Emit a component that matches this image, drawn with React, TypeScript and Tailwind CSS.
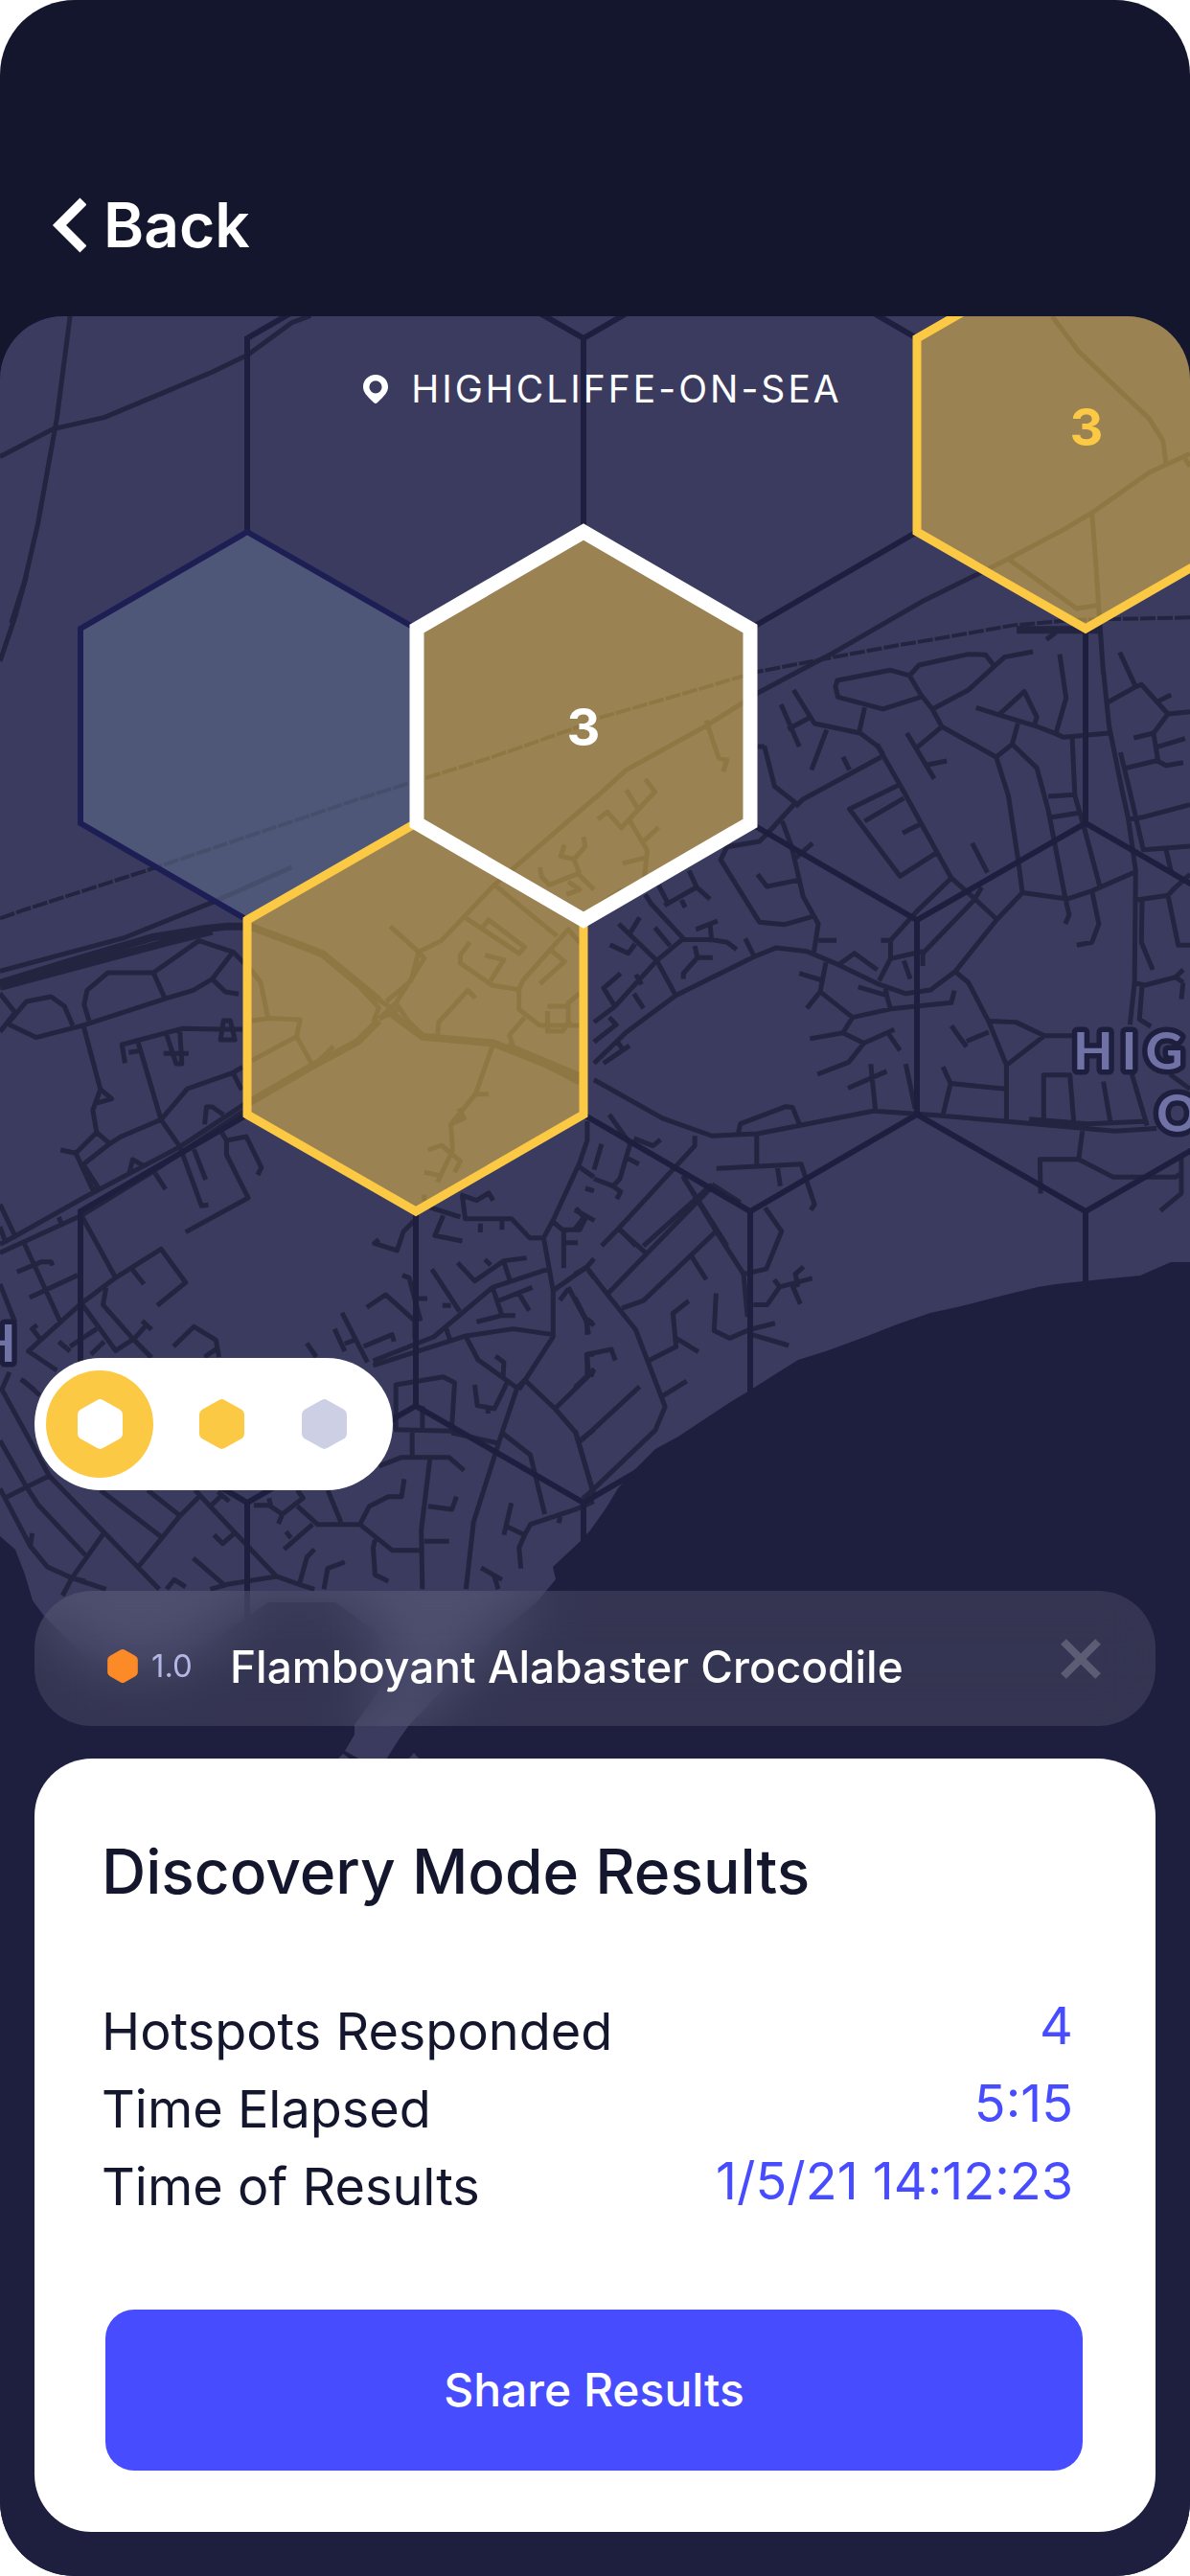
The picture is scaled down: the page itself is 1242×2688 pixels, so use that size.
import React, { useState } from "react";

type Tile = { transform: string; roads: string; thick?: string; rail?: string };

const LAND =
  "M0 330H1242V1317H1222L1190 1331L1149 1335L1102 1340L1083 1343L1042 1353L999 1364L971 1370L936 1382L903 1395L862 1410L833 1419L809 1434L784 1450L764 1462L735 1481L708 1499L684 1512L661 1535L645 1553L633 1573L616 1597L606 1608L577 1635L580 1648L560 1672L520 1705L470 1755L427 1800L415 1817L403 1836H376L360 1827L370 1810V1800L405 1750L395 1705L350 1672L280 1672L240 1700L180 1740L100 1740L45 1685L34 1670L26 1643L16 1617L0 1603Z";

const TILES: Tile[] = [
  {
    transform: "translate(0 150) scale(.3954 .3333)",
    roads:
      "M185 540L150 860L100 1190L65 1370L30 1500M0 980L140 893L275 857L420 785L560 715L655 660L770 560L820 538",
  },
  {
    transform: "translate(620 300) scale(.3967 .3333)",
    roads:
      "M1205 90L1275 200L1380 320L1460 410L1497 480L1505 555M1568 520L1460 580L1310 705L1240 755L1090 850L860 985L620 1150L430 1270M1555 535L1568 560M1310 705L1320 860L1330 1040L1340 1210M1090 850L1270 1005L1325 995M1190 1102L1215 1080M1155 1140L1080 1157L985 1260L890 1320L860 1275L830 1215L780 1198L640 1230L635 1250L642 1282L760 1320L865 1280M830 1215L855 1182L985 1148L1030 1150L1053 1185M890 1320L915 1375L1058 1470L1100 1430L1115 1365M915 1375L850 1440M823 1395L895 1538M875 1495L928 1482M1005 1315L1065 1338L1160 1372L1215 1397L1235 1408L1355 1395M1065 1338L1132 1265L1165 1345L1158 1372M1225 1148L1242 1285L1215 1397M525 1260L580 1365L700 1395L745 1435L760 1460M492 1305L540 1437M510 1383L570 1345M612 1385L572 1510M712 1315L697 1395M430 1437H448M1383 1142L1425 1250L1350 1300M1425 1250L1440 1243L1510 1335L1568 1328M1485 1295L1518 1275M1510 1335L1472 1395L1420 1410M1472 1395L1478 1440L1555 1412M1478 1440L1485 1490",
    thick: "M1112 1072H1335",
    rail: "M1568 1033L1370 1038L1270 1040L1100 1058L940 1092L800 1120L640 1155L430 1203L240 1270L0 1352",
  },
  {
    transform: "translate(0 600) scale(.3954 .3333)",
    roads:
      "M70 0L40 130L0 270M0 1240L330 1135L560 1025L770 915M0 1310L40 1370L0 1430M20 1405L70 1335L135 1320L170 1350L192 1410M20 1405L95 1448L220 1410L440 1325L510 1300L560 1265L615 1180L525 1145L405 1245L435 1325M405 1245H285L230 1300L222 1345L235 1395M560 1265L595 1305L630 1312M615 1180L665 1240L688 1275L708 1390M665 1395L708 1388L792 1392L783 1445M985 1400L1000 1355L950 1290L850 1190M1000 1390L1045 1365L1000 1330M1045 1340L1000 1390M1030 1100L1105 1180L1120 1200L1045 1340L1080 1400L1120 1445M1105 1180L1085 1270L1020 1335M1105 1180L1165 1145L1225 1070L1305 970L1568 700M1305 970L1470 1130M1225 1070L1370 1185L1385 1165L1290 1080L1272 1105M1240 1150L1215 1190V1215L1300 1285L1370 1298M1280 1190L1330 1205L1295 1270M1370 1298L1380 1270L1500 1110L1530 1150M1370 1298V1360L1425 1410H1530M1425 1280L1490 1210L1455 1175M1530 1310L1500 1340V1410M1445 1350H1500M1385 1385L1345 1440L1355 1480M1155 1440L1158 1400L1235 1300L1255 1325M1425 915L1430 945L1450 970L1525 935L1568 985M1540 820L1545 850L1515 890L1480 880L1490 845M1515 890L1530 935M1495 1000L1530 985L1500 960",
    thick:
      "M0 1278L200 1205L400 1135L540 1108L600 1100H660L850 1185L1000 1330M0 1290L440 1150L560 1115",
    rail: "M0 1075L60 1050L400 920L700 800L950 700L1300 570L1540 470L1568 458",
  },
  {
    transform: "translate(620 700) scale(.3967 .3827)",
    roads:
      "M1340 0L1355 150L1390 330L1405 400L1415 470L1425 545L1422 850L1410 965M1385 222L1410 330L1445 488L1568 478M1400 265L1480 245L1505 258L1550 250M1405 405L1440 400L1568 365M1258 180L1265 340L1290 430L1330 585M1195 342L1265 338M1200 400L1272 388M1100 200L1165 265L1195 380L1240 620L1250 665L1240 690M1058 235L1090 340L1115 510L1127 605L1245 622L1310 600L1420 550M1127 605L1060 678L950 820L885 870L820 880L750 855L640 800L560 765L480 755L420 780L215 885L85 985L0 1070M1310 600L1328 690L1310 740L1270 748M1425 625L1510 612L1530 590L1568 555M1505 488L1520 555M1510 612L1537 748H1568M1442 625L1440 740L1470 815M1425 852L1450 857L1530 835L1550 850M1530 835L1550 815M1550 850L1545 895M1442 857L1435 950L1465 970M448 205L475 315L530 360L455 445L435 465L350 480L333 515L435 685L500 692L575 670M755 235L550 350L530 370M655 235L672 270M745 200L760 230L810 320L860 415L940 565L1000 620L1060 678M800 312L672 377L805 560L900 497M815 347L712 410M812 442L858 418M940 565L850 655L780 735V785L750 845M495 410L520 480L540 570L550 615L590 690L578 770M430 555L455 588L540 570M575 470L525 515M590 735H638M995 470L1035 550M1020 590L1000 625L865 770V805M755 735H780M780 785L865 765M815 790L832 840M645 800L685 770L745 815M610 795L595 875L680 945L780 922L940 905L948 872M540 825L595 842M595 875L560 920M695 862L770 885L780 922M765 855L770 885M568 1003L655 987L710 1015L790 978M655 987L680 945M710 1015L670 1067L588 1100M775 990L805 1035M728 1072L740 1195M668 1138L770 1092M820 1072L845 1195M950 820L985 850L1040 960L1085 1075V1225M1040 955L1110 958L1185 995H1262M1185 995L1088 1073M940 968L980 1025M980 1010L1038 985M918 1080L938 1125L918 1210M938 1125L1083 1140M1183 1220V1102H1252L1262 1228M1340 1120L1358 1228M1415 1100L1455 1240M1145 1222L1300 1235L1455 1228M0 1115L180 1220L310 1268L430 1262L540 1240L735 1200L900 1212L1080 1228L1370 1255L1480 1248M380 1258L385 1235L505 1188L522 1190L542 1240M428 1262V1345M322 1357L545 1345L580 1455L570 1470M482 1350L490 1405M1285 1255L1275 1332L1365 1380H1530L1545 1370M1275 1332H1173L1175 1425M1545 1320V1425L1490 1472M1515 1100L1568 1140M135 610L150 635L235 730L165 790L55 915L0 958M170 585L195 635M185 640L270 590L250 545M270 590L305 622M230 625L240 645M235 733H310L350 740L375 760M268 705L325 682M305 690L310 740M265 750L272 782L235 825V840M272 782H312M65 690L165 790L215 885M120 672L95 715M42 747L90 770L108 745M160 700L200 750M398 730L422 780M110 828L125 855M70 825L25 865L55 915M105 880L130 920M0 1012L58 965L40 945M25 1070L93 1022M60 1010L75 1030M0 350L85 270L295 150L430 62M295 135L328 238L350 243L340 275M10 405L35 385L72 428L160 330L135 295M85 325L115 375M95 410L140 490L130 590L70 600L10 640M130 465L170 427M75 525L135 510M40 1210L95 1290L68 1385L50 1405L0 1385M105 1275L155 1295L175 1278M90 1330L118 1345M20 1290L0 1360M50 1405L70 1420L60 1440M265 1268V1295L65 1520L20 1568M235 1380L350 1568M65 1520L110 1568M310 1400L130 1568M310 1400L385 1450",
  },
  {
    transform: "translate(0 1050) scale(.3954 .3333)",
    roads:
      "M220 60L265 260L245 325L255 395L200 460L245 575L258 565L220 495L290 430L255 395M160 450L200 460M265 260L295 290L250 305M330 178L322 120L480 70L580 72H640M340 145L365 140M365 115L425 355M440 90L465 180H480L475 80M432 148H498M582 105L590 45H608L620 105ZM425 355L495 258L615 208L640 190M615 208L638 262M425 355L320 408L290 430M425 355L475 440L532 625L550 622M340 530L350 480L380 500M540 370L545 315H560L590 340M660 295L475 440L220 600L40 720L0 745M660 315L400 520L215 655L0 772M405 515L437 573M512 448L543 543M585 395L598 420L650 408L690 505L680 528M598 420V465L655 600L490 707M0 620L40 720M0 690L15 740M155 660L165 690M65 745L160 990M45 832L110 800L135 800L138 812M78 912L205 842M215 655L305 850L425 760L490 865L415 937M350 825L380 870M305 850L215 930L75 1080L150 1140M280 880L272 935L350 1040L400 1100M215 930L305 1078L355 1040L385 1000M375 985L400 1012M255 1010L185 1065M155 1050L185 1080M105 1040L85 1010L98 998M240 1090L275 1050M0 870L40 990M458 1065L512 1003L570 1045L578 1098M540 1098L575 1070M55 1168L90 1200M810 1055L835 1098M665 170L783 95L825 185M880 125L830 185M1340 120L1530 215M1300 125L1255 275L1190 370L1195 450L1155 550M1255 275H1290M1190 370L1225 350L1210 320M1130 450L1165 435L1215 485L1200 520M1120 520L1160 530M1120 590V610M1445 15V78H1485L1505 45M1095 670L1065 705L1048 765L988 742L1000 730M1135 630L1215 660M1170 655L1148 718L1220 735M1220 590L1228 665H1350L1398 725H1435L1460 670L1530 490L1550 420V360M1215 590L1258 608L1290 585L1302 608M1268 680V708M1325 670V700M1435 725L1460 890V1035L1370 1200M1450 822L1300 880L1145 1035L985 1110M1460 1028L1355 1010L1230 1032L985 1125M1300 880L1325 968L1258 988M1325 968H1360M1310 925L1405 880M1370 900L1397 953M1208 803L1253 860L1330 797L1390 788M1330 800L1345 855M1280 793L1295 810M1140 823L1213 955M1168 937H1190M1178 1010L1188 1045M1062 842L1080 850L1110 985M1095 1040V985L1018 903L968 943M1105 915H1128M903 960L970 1115M883 1010L910 1080M910 1057L935 1045M960 1065L1035 1028L1040 1050M1230 1035L1262 1107L1365 1195M1308 1095L1330 1115L1328 1160M1460 890L1550 815L1568 790M1460 675L1485 700H1530L1545 665L1520 632M1488 700V820M1488 740H1525M1500 880L1550 990V1028M1478 920L1500 885M1550 820L1568 850M1525 500L1568 535M1545 570L1568 578M1550 1145V1090H1568M1550 980L1568 1000M1545 1145L1568 1155",
    thick: "M1000 45L945 110L820 190L660 300M1030 20L1115 95L1300 115L1440 180L1530 235",
  },
  {
    transform: "translate(0 1380) scale(.3954 .3333)",
    roads:
      "M60 180L105 228M25 155L5 210L130 480L420 835M0 370L70 515L15 548M70 515L130 480M70 515L100 570L225 728M0 520L80 700L125 765L190 800L280 835M275 658L190 800M225 810L190 800L165 855M80 700L85 660M265 525L430 675M390 525L475 605L365 765M475 605L530 540M515 525L620 658L730 795L600 820L555 835M565 665L588 692L620 658M510 738L592 822M730 795L790 820L830 835M440 835L460 805L490 828M575 530L605 560M560 570L590 535M670 572H710L745 600L800 550L785 525M710 550L715 575M735 630L745 600M785 575L838 632H950L1035 713H1110M750 710L825 632M755 655L768 675M865 525L900 625M950 632L975 575L1025 545H1060L1067 490M1135 425L1112 650L1115 835M1120 685H1185M1130 575L1193 585L1205 545M1000 450L1060 422H1185L1225 463M1088 340V420M1045 335V195L1170 170L1200 188L1192 340L1040 335M1115 262V335M1365 205L1325 345L1250 625L1230 835M1192 345L1315 378M1325 345L1400 415L1438 600M1365 205L1385 180L1465 270L1520 345L1568 540M1465 270L1568 150M1530 370L1568 335M1253 195L1260 260L1305 270L1340 185M1288 270V285M1568 560L1520 585L1400 632L1385 665L1370 705L1375 770M1350 565L1330 665M1340 640L1385 665M1475 628L1480 600M990 680L985 705L990 790L1025 810M830 710L810 735L790 820M855 835L865 770L910 750M1270 768L1325 805M1305 795L1315 835",
  },
  {
    transform: "translate(600 1200) scale(.4094 .4464)",
    roads:
      "M30 275L0 290M30 275L85 340L155 420L230 600L205 655L45 795L20 815M345 90L85 335M115 187L180 240M360 190L175 352L120 370M295 245L335 303M275 60L360 190L430 290L440 390M485 135L527 190L488 278L430 290M455 362H490L522 320L605 300M508 303L522 320M583 273L562 290L568 315L555 318L575 360M360 335L355 422L395 440L445 420L510 405M445 430L545 457M290 353L250 382L258 460L187 493M258 440L315 472M220 577L285 540M0 345L28 395L35 430M45 405L30 395M35 520L30 478L93 466L103 492M50 512L0 555M165 553L15 680M0 655L45 795M0 140L50 165M0 185L25 155",
  },
];

const GRID =
  "M433 252L258 353V555M433 252L609 353V555M609 353L783 252L957 353M783 656L957 555M1133 656V859M783 859L957 960L1133 859L1308 960M957 960V1163M609 1163L783 1264L957 1163L1133 1264L1308 1163M783 1264V1467L609 1568L434 1467V1264M1133 1264V1467M258 1163L84 1264V1467L258 1568L434 1467M258 1568V1771M609 1568V1771";

const SELECTED = "609,555 783,656 783,859 609,960 435,859 435,656";

function CoverageMap() {
  return (
    <svg
      className="absolute inset-0 h-full w-full"
      viewBox="0 330 1242 2358"
      preserveAspectRatio="xMidYMin slice"
      role="img"
      aria-label="Hotspot coverage map"
    >
      <rect y="330" width="1242" height="2358" fill="#1E1F3F" />
      <path d={LAND} fill="#3A3B5F" />
      <path d="M352 1836L358 1830L366 1836ZM426 1836L432 1829L438 1836Z" fill="#3A3B5F" />
      <g fill="none" stroke="#232440" strokeWidth="5" strokeLinejoin="round">
        {TILES.map((t) => (
          <g key={t.transform} transform={t.transform}>
            <path d={t.roads} vectorEffect="non-scaling-stroke" />
            {t.thick && <path d={t.thick} strokeWidth="8" vectorEffect="non-scaling-stroke" />}
            {t.rail && (
              <path d={t.rail} strokeWidth="4" strokeDasharray="16 2" vectorEffect="non-scaling-stroke" />
            )}
          </g>
        ))}
      </g>
      <g
        className="font-['Lato'] text-[54px] font-bold tracking-[9px]"
        fill="#7072A6"
        stroke="#1E1F3F"
        strokeWidth="11"
        strokeLinejoin="round"
        paintOrder="stroke"
      >
        <text x="1120" y="1116">HIG</text>
        <text x="1207" y="1181">O</text>
        <text x="-25" y="1421">H</text>
      </g>
      <path d={GRID} fill="none" stroke="#1E1F3F" strokeWidth="6" />
      <polygon
        points="258,555 434,656 434,859 258,960 84,859 84,656"
        fill="#5D6B89"
        fillOpacity=".6"
        stroke="#1D1F54"
        strokeWidth="6"
      />
      <g fill="#FCC945" fillOpacity=".5" stroke="#FCC945" strokeWidth="9">
        <polygon points="1133,252 1308,353 1308,555 1133,656 957,555 957,353" />
        <polygon points="434,859 609,960 609,1163 434,1264 258,1163 258,960" />
      </g>
      <polygon points={SELECTED} fill="#FCC945" fillOpacity=".5" stroke="#fff" strokeWidth="15" />
      <g className="font-['Inter'] text-[54px] font-bold" textAnchor="middle">
        <text x="609" y="778" fill="#fff">3</text>
        <text x="1134" y="465" fill="#FCC945">3</text>
      </g>
    </svg>
  );
}

function Hex({ className }: { className: string }) {
  return (
    <svg viewBox="0 0 47 52" className={className} fill="currentColor" aria-hidden="true">
      <path d="M20.500 .900Q23.500 -.700 26.500 .900L43.500 10.500Q47 12.500 47 16.500V35.500Q47 39.500 43.500 41.500L26.500 51.100Q23.500 52.700 20.500 51.100L3.500 41.500Q0 39.500 0 35.500V16.500Q0 12.500 3.500 10.500Z" />
    </svg>
  );
}

const FILTERS = [
  { label: "Selected hexes", color: "text-[#FCC945]" },
  { label: "Responding hexes", color: "text-[#FCC945]" },
  { label: "Other hexes", color: "text-[#CDD0E4]" },
];

const RESULTS = [
  ["Hotspots Responded", "4"],
  ["Time Elapsed", "5:15"],
  ["Time of Results", "1/5/21 14:12:23"],
];

export default function App() {
  const [filter, setFilter] = useState(0);
  return (
    <div className="bg-white">
      <div className="flex min-h-screen flex-col overflow-hidden rounded-[78px] bg-[#14162E] font-['Inter',sans-serif]">
        <header className="px-[54px] pt-[195px] pb-[55px]">
          <button type="button" className="flex h-20 items-center gap-[18px] text-[64px] font-semibold text-white">
            <svg viewBox="0 0 36 58" className="h-[58px] w-9" fill="none" stroke="currentColor" strokeWidth="10" aria-hidden="true">
              <path d="M33 4L8 29L33 54" />
            </svg>
            Back
          </button>
        </header>

        <main className="relative flex grow flex-col overflow-hidden rounded-t-[66px] px-9 pb-[46px]">
          <CoverageMap />

          <h2 className="relative mt-[52px] flex items-center justify-center gap-6 pl-4 text-[39px] leading-12 tracking-[3px] text-white">
            <svg viewBox="0 0 26 30" className="h-[30px] w-[26px]" fill="currentColor" fillRule="evenodd" aria-hidden="true">
              <path d="M13 0C5.600 0 0 5.600 0 12.600C0 18 3 21.500 11 29C12.300 30.300 13.700 30.300 15 29C23 21.500 26 18 26 12.600C26 5.600 20.400 0 13 0ZM13 6.200A6.600 6.600 0 1 1 13 19.400A6.600 6.600 0 1 1 13 6.200Z" />
            </svg>
            HIGHCLIFFE-ON-SEA
          </h2>

          <div
            role="group"
            aria-label="Map filter"
            className="relative mt-auto mb-[105px] flex h-[138px] items-center self-start rounded-full bg-white pr-[18px] pl-3"
          >
            {FILTERS.map((f, i) => (
              <button
                key={f.label}
                type="button"
                aria-label={f.label}
                aria-pressed={filter === i}
                onClick={() => setFilter(i)}
                className={
                  filter === i
                    ? "mr-[18px] flex size-28 items-center justify-center rounded-full bg-[#FCC945] text-white"
                    : `flex h-28 w-[107px] items-center justify-center rounded-full ${f.color}`
                }
              >
                <Hex className="h-[52px] w-[47px]" />
              </button>
            ))}
          </div>

          <section className="relative mb-[34px] flex h-[141px] items-center rounded-[60px] bg-white/10 pr-[54px] pl-[76px] backdrop-blur-[28px]">
            <Hex className="mt-4 h-[35px] w-8 text-[#FC8A27]" />
            <span className="mt-4 ml-[14px] w-[82px] text-[33px] text-[#B4B6E6]">1.0</span>
            <h3 className="mt-4 grow text-[46px] leading-15 font-medium text-white">Flamboyant Alabaster Crocodile</h3>
            <button type="button" aria-label="Dismiss" className="text-white/20">
              <svg viewBox="0 0 48 48" className="size-12" fill="none" stroke="currentColor" strokeWidth="8" aria-hidden="true">
                <path d="M6 6L42 42M42 6L6 42" />
              </svg>
            </button>
          </section>

          <section className="relative rounded-[60px] bg-white px-[70px] pt-[78px] pb-16 text-[#14162E]">
            <h1 className="text-[64px] leading-20 font-medium">Discovery Mode Results</h1>
            <dl className="mt-[86px] text-[54px] leading-[81px]">
              {RESULTS.map(([label, value]) => (
                <div key={label} className="flex justify-between pr-4">
                  <dt>{label}</dt>
                  <dd className="-mt-[6px] mb-[6px] text-[#474DFF]">{value}</dd>
                </div>
              ))}
            </dl>
            <button
              type="button"
              className="mt-[88px] ml-1 block h-[168px] w-[calc(100%-10px)] rounded-[30px] bg-[#474DFF] text-[48px] font-medium text-white"
            >
              Share Results
            </button>
          </section>
        </main>
      </div>
    </div>
  );
}
